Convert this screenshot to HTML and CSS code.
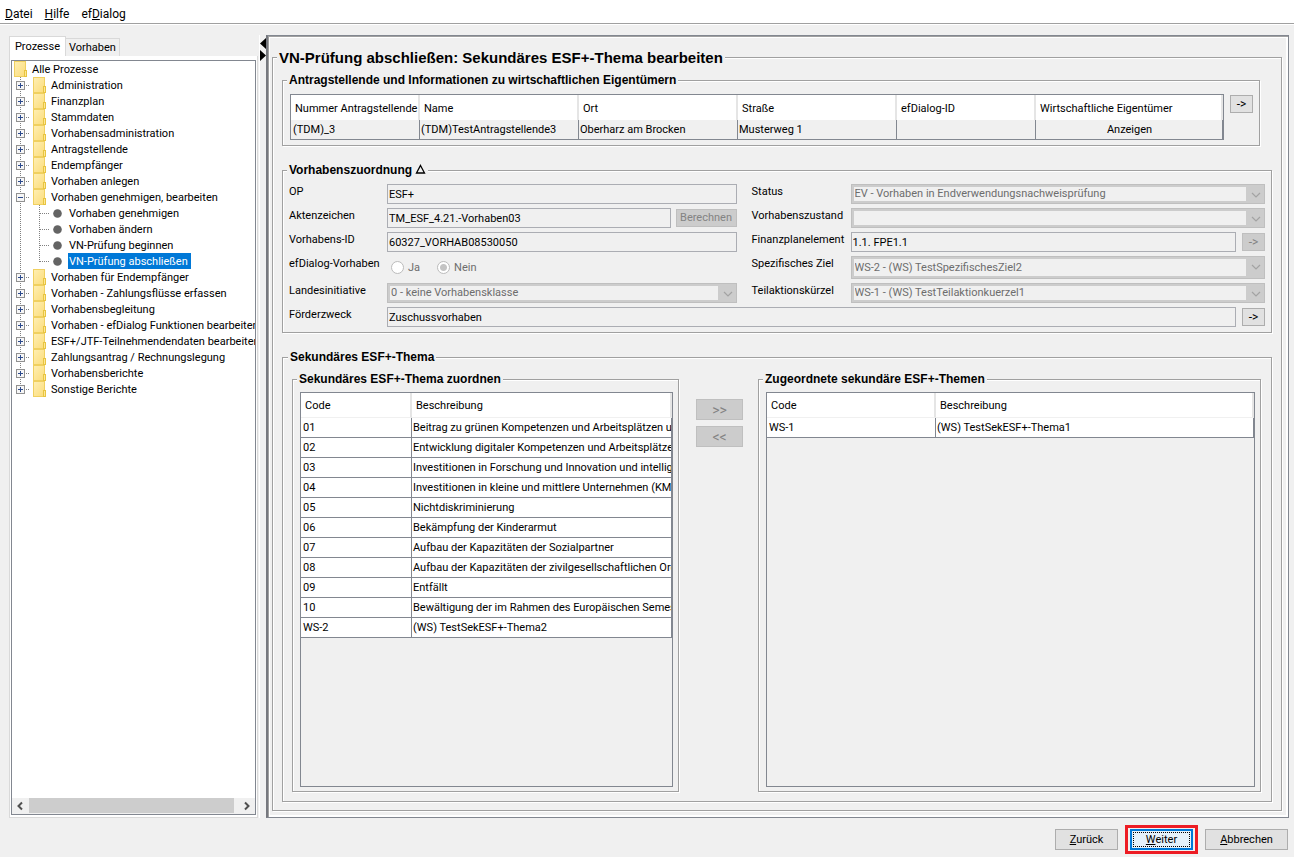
FILE: index.html
```
<!DOCTYPE html>
<html lang="de">
<head>
<meta charset="utf-8">
<title>efDialog</title>
<link rel="stylesheet" href="styles.css">
</head>
<body>
<svg class="defs" aria-hidden="true">
  <defs>
    <linearGradient id="paper" x1="0" y1="0" x2="1" y2="1">
      <stop offset="0" stop-color="#ffefb4"/>
      <stop offset="1" stop-color="#fbdc79"/>
    </linearGradient>
    <symbol id="folder" viewBox="0 0 14 16">
      <rect x="0.5" y="0.5" width="11" height="15" fill="url(#paper)" stroke="#f0d060"/>
      <rect x="10.5" y="9.5" width="2" height="6" fill="#fde795" stroke="#e8c440"/>
    </symbol>
    <symbol id="box" viewBox="0 0 21 16">
      <path d="M8.5 0v16" stroke="#808080" stroke-dasharray="1 1" fill="none"/>
      <path d="M14 8.5h4" stroke="#808080" stroke-dasharray="1 1" fill="none"/>
      <rect x="4.5" y="4.5" width="8" height="8" fill="#f6f6f6" stroke="#919191"/>
      <path d="M6 8.5h5" stroke="#2c4a8c" fill="none"/>
    </symbol>
    <symbol id="plus" viewBox="0 0 21 16">
      <use href="#box" width="21" height="16"/>
      <path d="M8.5 6v5" stroke="#2c4a8c" fill="none"/>
    </symbol>
    <symbol id="plus-last" viewBox="0 0 21 16">
      <path d="M8.5 0v4" stroke="#808080" stroke-dasharray="1 1" fill="none"/>
      <path d="M14 8.5h4" stroke="#808080" stroke-dasharray="1 1" fill="none"/>
      <rect x="4.5" y="4.5" width="8" height="8" fill="#f6f6f6" stroke="#919191"/>
      <path d="M6 8.5h5M8.5 6v5" stroke="#2c4a8c" fill="none"/>
    </symbol>
    <symbol id="branch" viewBox="0 0 54 16">
      <path d="M8.5 0v16M27.5 0v16M28 8.5h9" stroke="#808080" stroke-dasharray="1 1" fill="none"/>
      <circle cx="45.5" cy="8.5" r="4.3" fill="#646464"/>
    </symbol>
    <symbol id="branch-last" viewBox="0 0 54 16">
      <path d="M8.5 0v16M27.5 0v9M28 8.5h9" stroke="#808080" stroke-dasharray="1 1" fill="none"/>
      <circle cx="45.5" cy="8.5" r="4.3" fill="#646464"/>
    </symbol>
    <symbol id="chevron" viewBox="0 0 17 16">
      <path d="M5 6l4 4 4-4" stroke="#a3a3a3" stroke-width="1.2" fill="none"/>
    </symbol>
  </defs>
</svg>

<nav class="menubar">
  <button type="button"><u>D</u>atei</button>
  <button type="button"><u>H</u>ilfe</button>
  <button type="button">ef<u>D</u>ialog</button>
</nav>

<div class="workspace">
  <aside class="sidebar">
    <div class="tabs" role="tablist">
      <button type="button" class="tab tab-active" role="tab" aria-selected="true">Prozesse</button>
      <button type="button" class="tab" role="tab" aria-selected="false">Vorhaben</button>
    </div>
    <div class="tab-pane">
      <div class="tree-view">
        <ul class="tree" role="tree">
          <li class="node node-root"><svg class="i-folder"><use href="#folder"/></svg><span>Alle Prozesse</span></li>
          <li class="node"><svg class="i-box"><use href="#plus"/></svg><svg class="i-folder"><use href="#folder"/></svg><span>Administration</span></li>
          <li class="node"><svg class="i-box"><use href="#plus"/></svg><svg class="i-folder"><use href="#folder"/></svg><span>Finanzplan</span></li>
          <li class="node"><svg class="i-box"><use href="#plus"/></svg><svg class="i-folder"><use href="#folder"/></svg><span>Stammdaten</span></li>
          <li class="node"><svg class="i-box"><use href="#plus"/></svg><svg class="i-folder"><use href="#folder"/></svg><span>Vorhabensadministration</span></li>
          <li class="node"><svg class="i-box"><use href="#plus"/></svg><svg class="i-folder"><use href="#folder"/></svg><span>Antragstellende</span></li>
          <li class="node"><svg class="i-box"><use href="#plus"/></svg><svg class="i-folder"><use href="#folder"/></svg><span>Endempfänger</span></li>
          <li class="node"><svg class="i-box"><use href="#plus"/></svg><svg class="i-folder"><use href="#folder"/></svg><span>Vorhaben anlegen</span></li>
          <li class="node"><svg class="i-box"><use href="#box"/></svg><svg class="i-folder"><use href="#folder"/></svg><span>Vorhaben genehmigen, bearbeiten</span></li>
          <li class="node"><svg class="i-branch"><use href="#branch"/></svg><span>Vorhaben genehmigen</span></li>
          <li class="node"><svg class="i-branch"><use href="#branch"/></svg><span>Vorhaben ändern</span></li>
          <li class="node"><svg class="i-branch"><use href="#branch"/></svg><span>VN-Prüfung beginnen</span></li>
          <li class="node"><svg class="i-branch"><use href="#branch-last"/></svg><span class="selected">VN-Prüfung abschließen</span></li>
          <li class="node"><svg class="i-box"><use href="#plus"/></svg><svg class="i-folder"><use href="#folder"/></svg><span>Vorhaben für Endempfänger</span></li>
          <li class="node"><svg class="i-box"><use href="#plus"/></svg><svg class="i-folder"><use href="#folder"/></svg><span>Vorhaben - Zahlungsflüsse erfassen</span></li>
          <li class="node"><svg class="i-box"><use href="#plus"/></svg><svg class="i-folder"><use href="#folder"/></svg><span>Vorhabensbegleitung</span></li>
          <li class="node"><svg class="i-box"><use href="#plus"/></svg><svg class="i-folder"><use href="#folder"/></svg><span>Vorhaben - efDialog Funktionen bearbeiten</span></li>
          <li class="node"><svg class="i-box"><use href="#plus"/></svg><svg class="i-folder"><use href="#folder"/></svg><span>ESF+/JTF-Teilnehmendendaten bearbeiten</span></li>
          <li class="node"><svg class="i-box"><use href="#plus"/></svg><svg class="i-folder"><use href="#folder"/></svg><span>Zahlungsantrag / Rechnungslegung</span></li>
          <li class="node"><svg class="i-box"><use href="#plus"/></svg><svg class="i-folder"><use href="#folder"/></svg><span>Vorhabensberichte</span></li>
          <li class="node"><svg class="i-box"><use href="#plus-last"/></svg><svg class="i-folder"><use href="#folder"/></svg><span>Sonstige Berichte</span></li>
        </ul>
        <div class="scrollbar">
          <button type="button" aria-label="Nach links"><svg viewBox="0 0 17 16"><path d="M10 4.500L6.500 8l3.500 3.500" stroke="#505050" stroke-width="2" fill="none"/></svg></button>
          <div class="scroll-track"><div class="scroll-thumb"></div></div>
          <button type="button" aria-label="Nach rechts"><svg viewBox="0 0 17 16"><path d="M7 4.500l3.500 3.500L7 11.500" stroke="#505050" stroke-width="2" fill="none"/></svg></button>
        </div>
      </div>
    </div>
  </aside>

  <div class="splitter">
    <svg viewBox="0 0 6 30"><path d="M6 3v11L0 8.500zM0 15v11l6-5.500z" fill="#000"/></svg>
  </div>

  <main class="panel">
    <fieldset class="group group-page">
      <legend class="page-title">VN-Prüfung abschließen: Sekundäres ESF+-Thema bearbeiten</legend>

      <fieldset class="group group-applicant">
        <legend>Antragstellende und Informationen zu wirtschaftlichen Eigentümern</legend>
        <div class="table-box">
          <table>
            <colgroup><col class="c-number"><col class="c-wide"><col class="c-wide"><col class="c-wide"><col class="c-id"><col></colgroup>
            <thead><tr><th>Nummer Antragstellende</th><th>Name</th><th>Ort</th><th>Straße</th><th>efDialog-ID</th><th>Wirtschaftliche Eigentümer</th></tr></thead>
            <tbody><tr><td>(TDM)_3</td><td>(TDM)TestAntragstellende3</td><td>Oberharz am Brocken</td><td>Musterweg 1</td><td></td><td class="centered">Anzeigen</td></tr></tbody>
          </table>
        </div>
        <button type="button" class="btn btn-arrow">-&gt;</button>
      </fieldset>

      <fieldset class="group group-project">
        <legend>Vorhabenszuordnung <svg class="i-delta" viewBox="0 0 11 10"><path d="M5.500 1.500L9.500 9h-8z" fill="none" stroke="#000" stroke-width="1.300"/></svg></legend>
        <div class="form">
          <label for="op">OP</label>
          <input class="field" id="op" value="ESF+" readonly>
          <label class="label-right" for="status">Status</label>
          <div class="combo span-2"><select id="status" disabled><option>EV - Vorhaben in Endverwendungsnachweisprüfung</option></select><svg><use href="#chevron"/></svg></div>

          <label for="akte">Aktenzeichen</label>
          <div class="with-button"><input class="field" id="akte" value="TM_ESF_4.21.-Vorhaben03" readonly><button type="button" class="btn btn-calc" disabled>Berechnen</button></div>
          <label class="label-right" for="zustand">Vorhabenszustand</label>
          <div class="combo span-2"><select id="zustand" disabled><option></option></select><svg><use href="#chevron"/></svg></div>

          <label for="vid">Vorhabens-ID</label>
          <input class="field" id="vid" value="60327_VORHAB08530050" readonly>
          <label class="label-right" for="fpe">Finanzplanelement</label>
          <input class="field" id="fpe" value="1.1. FPE1.1" readonly>
          <button type="button" class="btn btn-arrow" disabled>-&gt;</button>

          <span class="label">efDialog-Vorhaben</span>
          <div class="radios">
            <label><input type="radio" name="efd" disabled>Ja</label>
            <label><input type="radio" name="efd" checked disabled>Nein</label>
          </div>
          <label class="label-right" for="ziel">Spezifisches Ziel</label>
          <div class="combo span-2"><select id="ziel" disabled><option>WS-2 - (WS) TestSpezifischesZiel2</option></select><svg><use href="#chevron"/></svg></div>

          <label for="land">Landesinitiative</label>
          <div class="combo"><select id="land" disabled><option>0 - keine Vorhabensklasse</option></select><svg><use href="#chevron"/></svg></div>
          <label class="label-right" for="teil">Teilaktionskürzel</label>
          <div class="combo span-2"><select id="teil" disabled><option>WS-1 - (WS) TestTeilaktionkuerzel1</option></select><svg><use href="#chevron"/></svg></div>

          <label for="zweck">Förderzweck</label>
          <input class="field span-3" id="zweck" value="Zuschussvorhaben" readonly>
          <button type="button" class="btn btn-arrow">-&gt;</button>
        </div>
      </fieldset>

      <fieldset class="group group-topics">
        <legend>Sekundäres ESF+-Thema</legend>
        <fieldset class="group group-list">
          <legend>Sekundäres ESF+-Thema zuordnen</legend>
          <div class="table-box">
            <table class="list">
              <colgroup><col class="c-code"><col></colgroup>
              <thead><tr><th>Code</th><th>Beschreibung</th></tr></thead>
              <tbody>
                <tr><td>01</td><td>Beitrag zu grünen Kompetenzen und Arbeitsplätzen und</td></tr>
                <tr><td>02</td><td>Entwicklung digitaler Kompetenzen und Arbeitsplätze</td></tr>
                <tr><td>03</td><td>Investitionen in Forschung und Innovation und intelligente</td></tr>
                <tr><td>04</td><td>Investitionen in kleine und mittlere Unternehmen (KMU)</td></tr>
                <tr><td>05</td><td>Nichtdiskriminierung</td></tr>
                <tr><td>06</td><td>Bekämpfung der Kinderarmut</td></tr>
                <tr><td>07</td><td>Aufbau der Kapazitäten der Sozialpartner</td></tr>
                <tr><td>08</td><td>Aufbau der Kapazitäten der zivilgesellschaftlichen Org</td></tr>
                <tr><td>09</td><td>Entfällt</td></tr>
                <tr><td>10</td><td>Bewältigung der im Rahmen des Europäischen Semesters</td></tr>
                <tr><td>WS-2</td><td>(WS) TestSekESF+-Thema2</td></tr>
              </tbody>
            </table>
          </div>
        </fieldset>
        <div class="transfer">
          <button type="button" class="btn" disabled>&gt;&gt;</button>
          <button type="button" class="btn" disabled>&lt;&lt;</button>
        </div>
        <fieldset class="group group-list">
          <legend>Zugeordnete sekundäre ESF+-Themen</legend>
          <div class="table-box">
            <table class="list">
              <colgroup><col class="c-code-wide"><col></colgroup>
              <thead><tr><th>Code</th><th>Beschreibung</th></tr></thead>
              <tbody><tr><td>WS-1</td><td>(WS) TestSekESF+-Thema1</td></tr></tbody>
            </table>
          </div>
        </fieldset>
      </fieldset>
    </fieldset>
  </main>
</div>

<footer class="actions">
  <button type="button" class="btn btn-back"><u>Z</u>urück</button>
  <div class="highlight"><button type="button" class="btn btn-next"><span><u>W</u>eiter</span></button></div>
  <button type="button" class="btn btn-cancel"><u>A</u>bbrechen</button>
</footer>
</body>
</html>
```
FILE: styles.css
```
* { box-sizing: border-box; }

body {
  margin: 0;
  min-height: 100vh;
  display: flex;
  flex-direction: column;
  background: #f0f0f0;
  color: #000;
  font: 11px/14px Roboto, "Liberation Sans", sans-serif;
}

button, input, select { font: inherit; color: inherit; }
button { margin: 0; padding: 0; }
u { text-decoration: underline; text-underline-offset: 1px; }
.defs { position: absolute; width: 0; height: 0; }

/* Menu bar */
.menubar {
  display: flex;
  gap: 12px;
  height: 24px;
  padding: 4px 5px 0;
  background: #fff;
  border-bottom: 1px solid #a0a0a0;
  box-shadow: 0 1px 0 #fff;
  font-size: 12px;
}
.menubar button { height: 19px; border: 0; background: none; }

/* Columns */
.workspace {
  flex: 1;
  display: flex;
  min-height: 0;
  padding: 11px 5px 0 9px;
}

/* Sidebar */
.sidebar {
  flex: none;
  width: 249px;
  display: flex;
  flex-direction: column;
}
.tabs {
  display: flex;
  align-items: flex-end;
  height: 21px;
  padding-top: 1px;
}
.tab {
  width: 54px;
  height: 18px;
  border: 1px solid #d9d9d9;
  border-left: 0;
  border-bottom: 0;
  background: #f0f0f0;
}
.tab-active {
  width: 57px;
  height: 20px;
  border-left: 1px solid #d9d9d9;
  background: #fff;
}
.tab-pane {
  flex: 1;
  display: flex;
  padding: 4px 1px 2px;
  border: 1px solid #d9d9d9;
  border-top: 0;
  background: #fff;
}
.tree-view {
  flex: 1;
  min-width: 0;
  display: flex;
  flex-direction: column;
  border: 1px solid #828790;
}
.tree {
  flex: 1;
  margin: 0;
  padding: 0;
  overflow: hidden;
  list-style: none;
}
.node {
  display: flex;
  height: 16px;
  line-height: 17px;
  white-space: nowrap;
}
.node-root { padding-left: 2px; }
.node svg { flex: none; height: 16px; }
.node span { height: 16px; padding: 0 1px; margin-left: 3px; }
.node .i-branch + span { margin-left: 2px; }
.i-folder { width: 14px; }
.i-box { width: 21px; }
.i-branch { width: 54px; }
.node .selected { padding-right: 3px; background: #0078d7; color: #fff; }

.scrollbar { display: flex; height: 16px; background: #f0f0f0; }
.scrollbar button { width: 17px; height: 16px; border: 0; background: none; }
.scrollbar button svg { display: block; width: 17px; height: 16px; }
.scroll-track { flex: 1; }
.scroll-thumb { width: 98%; height: 15px; background: #cdcdcd; }

/* Splitter */
.splitter {
  flex: none;
  width: 8px;
  padding-left: 2px;
  background: linear-gradient(90deg, transparent 1px, #fff 1px, #fff 2px, transparent 2px);
}
.splitter svg { display: block; width: 6px; height: 30px; }

/* Main panel */
.panel {
  flex: 1;
  min-width: 0;
  display: flex;
  padding: 13px 6px 6px 4px;
  border: 1px solid #828790;
  border-left: 2px solid #76787e;
  box-shadow: inset 1px 1px 0 #a0a0a0, inset 2px 2px 0 #fff, inset -2px -2px 0 #fff;
}

.group {
  min-width: 0;
  margin: 0;
  padding: 0;
  border: 1px solid #a0a0a0;
  box-shadow: inset 1px 1px 0 #fff, 1px 1px 0 #fff;
}
.group > legend {
  height: 16px;
  margin-left: 0;
  padding: 0 2px;
  background: #f0f0f0;
  font: bold 12px/17px "Liberation Sans", Arial, sans-serif;
}
.group-page {
  flex: 1;
  display: flex;
  flex-direction: column;
  gap: 16px;
  padding: 7px 9px 8px;
}
.group-applicant {
  display: flex;
  align-items: flex-start;
  gap: 6px;
  margin-right: 12px;
  padding: 6px 6px 5px 7px;
}
.group-project { padding: 6px 6px 5px 4px; }
.group-topics {
  flex: 1;
  display: grid;
  grid-template-columns: 387fr 79px 503fr;
  padding: 6px 10px 9px 9px;
}
.group-list { display: flex; padding: 5px 5px 4px 7px; }
.group-page > .page-title { margin-left: -5px; font-size: 15px; }
.group-topics > legend { margin-left: -4px; }
.group-applicant > legend, .group-list > legend { margin-left: -3px; }
.i-delta { width: 11px; height: 10px; }

/* Tables */
.table-box {
  flex: 1;
  min-width: 0;
  overflow: hidden;
  border: 1px solid #828790;
}
table { width: 100%; border-collapse: separate; border-spacing: 0; table-layout: fixed; }
th, td {
  overflow: hidden;
  white-space: nowrap;
  text-align: left;
  font-weight: normal;
}
th {
  height: 25px;
  padding: 2px 0 0 4px;
  background: #fff;
  border-right: 2px solid #e5e5e5;
}
td {
  height: 19px;
  padding: 0 0 0 2px;
  border-right: 1px solid #828790;
}
td + td { padding-left: 1px; }
.centered { text-align: center; }
.c-number { width: 129px; }
.c-wide { width: 159px; }
.c-id { width: 139px; }
.c-code { width: 111px; }
.c-code-wide { width: 169px; }
.list th { border-bottom: 1px solid #f0f0f0; }
.list td { height: 20px; background: #fff; border-bottom: 1px solid #828790; }

/* Buttons */
.btn {
  border: 1px solid #adadad;
  background: #e1e1e1;
}
.btn:disabled { border-color: #bfbfbf; background: #ccc; color: #838383; }
.btn-arrow { flex: none; width: 23px; height: 18px; margin-top: 1px; font-size: 12px; line-height: 14px; }

/* Form */
.form {
  display: grid;
  grid-template-columns: 100px 350fr 114px 386fr 29px;
  grid-template-rows: 20px 20px 20px 23px 20px 20px;
  row-gap: 4px;
}
.form > label, .form > .label { padding: 1px 0 0 2px; }
.form > .label-right { padding-left: 15px; }
.field {
  width: 100%;
  min-width: 0;
  height: 20px;
  padding: 0 1px;
  border: 1px solid #abadb3;
  border-radius: 0;
  background: #f0f0f0;
}
.span-2 { grid-column: span 2; }
.span-3 { grid-column: span 3; }
.form > .btn-arrow { justify-self: end; }
.with-button { display: flex; gap: 5px; }
.btn-calc { flex: none; width: 61px; height: 18px; margin-top: 1px; }
.combo {
  display: flex;
  padding: 2px 0 2px 2px;
  border: 1px solid #bfbfbf;
  background: #ccc;
}
.combo select {
  flex: 1;
  min-width: 0;
  padding: 0 1px;
  border: 0;
  border-radius: 0;
  appearance: none;
  background: #f0f0f0;
  color: #6d6d6d;
  opacity: 1;
}
.combo svg { flex: none; width: 17px; height: 16px; margin-left: 1px; }
.radios { display: flex; align-items: center; gap: 17px; padding-left: 4px; color: #6d6d6d; }
.radios label { display: flex; align-items: center; gap: 4px; }
.radios input {
  width: 13px;
  height: 13px;
  margin: 0;
  border: 1px solid #bcbcbc;
  border-radius: 50%;
  appearance: none;
  background: #fff;
}
.radios input:checked { background: radial-gradient(circle, #c4c4c4 3px, #fff 4px); }

/* Transfer buttons */
.transfer {
  display: flex;
  flex-direction: column;
  gap: 6px;
  padding: 28px 15px 0 17px;
}
.transfer .btn { height: 21px; font-size: 14px; }

/* Bottom actions */
.actions {
  display: flex;
  justify-content: flex-end;
  align-items: center;
  gap: 7px;
  height: 39px;
  padding: 4px 6px 0 0;
}
.actions .btn { height: 21px; }
.btn-back { width: 63px; }
.highlight { padding: 1px 2px; border: 3px solid #ed1c24; }
.actions .btn-next {
  display: block;
  width: 63px;
  height: 21px;
  padding: 1px;
  border: 2px solid #0078d7;
  background: #e5f1fb;
}
.btn-next span { display: block; height: 100%; border: 1px dotted #000; line-height: 13px; }
.btn-cancel { width: 83px; }
```
